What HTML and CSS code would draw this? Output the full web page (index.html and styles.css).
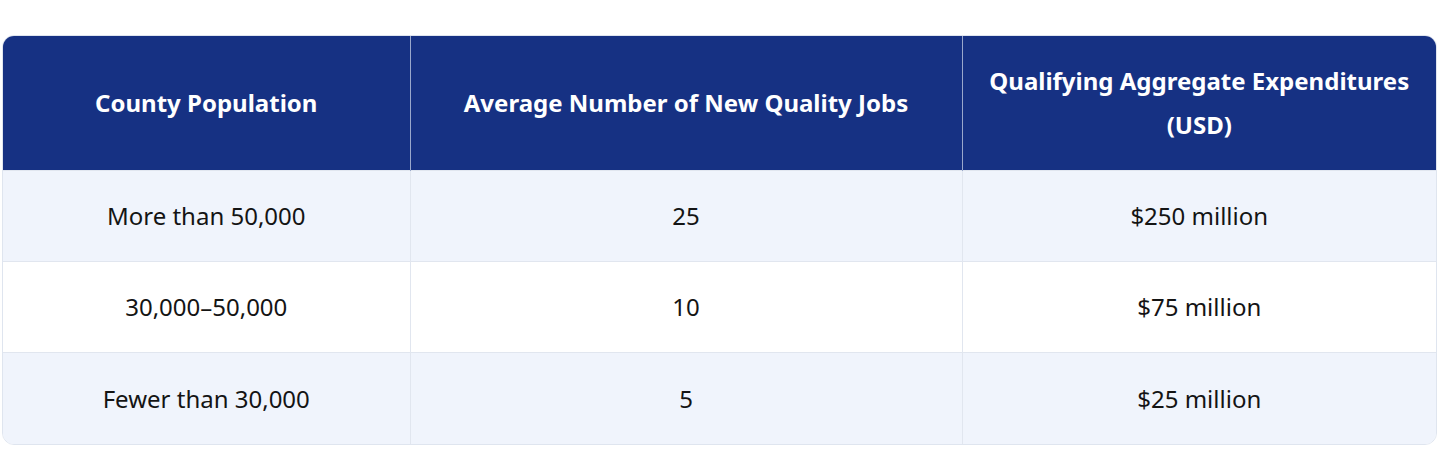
FILE: index.html
```html
<!DOCTYPE html>
<html lang="en">
<head>
<meta charset="utf-8">
<title>Qualifying thresholds</title>
<link rel="stylesheet" href="styles.css">
</head>
<body>
<main class="page">
  <div class="table-card">
    <table class="data-table">
      <colgroup>
        <col class="c1"><col class="c2"><col class="c3">
      </colgroup>
      <thead>
        <tr>
          <th>County Population</th>
          <th>Average Number of New Quality Jobs</th>
          <th>Qualifying Aggregate Expenditures<br>(USD)</th>
        </tr>
      </thead>
      <tbody>
        <tr class="alt">
          <td>More than 50,000</td>
          <td>25</td>
          <td>$250 million</td>
        </tr>
        <tr>
          <td>30,000–50,000</td>
          <td>10</td>
          <td>$75 million</td>
        </tr>
        <tr class="alt last">
          <td>Fewer than 30,000</td>
          <td>5</td>
          <td>$25 million</td>
        </tr>
      </tbody>
    </table>
  </div>
</main>
</body>
</html>
```
FILE: styles.css
```css
* { box-sizing: border-box; }
html, body { margin: 0; padding: 0; background: #ffffff; }
body { font-family: "Noto Sans", "Open Sans", sans-serif; color: #141414; }
.page { padding: 35px 3px 22px 2px; }
.table-card {
  border: 1px solid #dfe5ef;
  border-radius: 12px;
  overflow: hidden;
}
.data-table {
  width: 100%;
  border-collapse: collapse;
  table-layout: fixed;
}
.c1 { width: 407px; }
.c2 { width: 552px; }
.c3 { width: auto; }
.data-table th {
  background: #163183;
  color: #ffffff;
  font-weight: 700;
  font-size: 24px;
  line-height: 44px;
  height: 134px;
  text-align: center;
  vertical-align: middle;
  padding: 0 14px;
  border-left: 1px solid #9aa8cc;
}
.data-table th:first-child { border-left: none; }
.data-table td {
  font-size: 24px;
  text-align: center;
  vertical-align: middle;
  height: 91px;
  padding: 0 16px;
  border-left: 1px solid #e1e6ef;
  border-top: 1px solid #e1e6ef;
}
.data-table td:first-child { border-left: none; }
.data-table tr.alt td { background: #f0f4fc; }
.data-table tr.last td { height: 92px; }
```
